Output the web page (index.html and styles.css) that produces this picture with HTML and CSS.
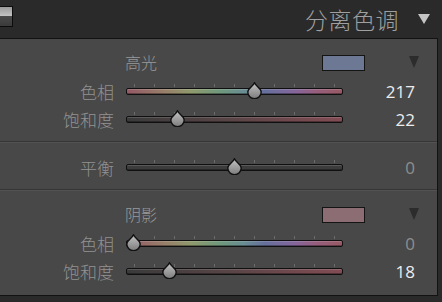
FILE: index.html
```html
<!DOCTYPE html>
<html lang="zh-CN">
<head>
  <meta charset="UTF-8" />
  <title>分离色调</title>
  <link rel="stylesheet" href="styles.css">
</head>
<body>
  <header class="panel-head">
    <span class="head-toggle"></span>
    <h1 class="head-title">分离色调</h1>
    <span class="head-arrow"></span>
  </header>

  <main class="panel">
    <section class="group">
      <div class="group-head">
        <span class="group-title">高光</span>
        <span class="swatch swatch-high"></span>
        <span class="group-arrow"></span>
      </div>
      <div class="row">
        <label class="row-label">色相</label>
        <div class="track-cell">
          <div class="bar bar-hue"></div>
          <svg class="thumb" style="--v:0.603" viewBox="0 0 15 17"><use href="#drop"/></svg>
        </div>
        <span class="row-value">217</span>
      </div>
      <div class="row">
        <label class="row-label">饱和度</label>
        <div class="track-cell">
          <div class="bar bar-sat"></div>
          <svg class="thumb" style="--v:0.22" viewBox="0 0 15 17"><use href="#drop"/></svg>
        </div>
        <span class="row-value">22</span>
      </div>
    </section>

    <section class="group group-balance">
      <div class="row">
        <label class="row-label">平衡</label>
        <div class="track-cell">
          <div class="bar bar-plain"></div>
          <svg class="thumb" style="--v:0.5" viewBox="0 0 15 17"><use href="#drop"/></svg>
        </div>
        <span class="row-value zero">0</span>
      </div>
    </section>

    <section class="group group-last">
      <div class="group-head">
        <span class="group-title">阴影</span>
        <span class="swatch swatch-shadow"></span>
        <span class="group-arrow"></span>
      </div>
      <div class="row">
        <label class="row-label">色相</label>
        <div class="track-cell">
          <div class="bar bar-hue"></div>
          <svg class="thumb" style="--v:0" viewBox="0 0 15 17"><use href="#drop"/></svg>
        </div>
        <span class="row-value zero">0</span>
      </div>
      <div class="row">
        <label class="row-label">饱和度</label>
        <div class="track-cell">
          <div class="bar bar-sat"></div>
          <svg class="thumb" style="--v:0.18" viewBox="0 0 15 17"><use href="#drop"/></svg>
        </div>
        <span class="row-value">18</span>
      </div>
    </section>
  </main>

  <svg class="defs" width="0" height="0">
    <defs>
      <linearGradient id="dropFill" x1="0" y1="0" x2="0" y2="1">
        <stop offset="0" stop-color="#c4c4c4"/>
        <stop offset="1" stop-color="#7c7c7c"/>
      </linearGradient>
      <symbol id="drop" viewBox="0 0 15 17">
        <path d="M7.5 0.8 C9 4.5 14.2 6.5 14.2 10 A6.7 6.7 0 0 1 0.8 10 C0.8 6.5 6 4.5 7.5 0.8 Z" fill="url(#dropFill)" stroke="#111" stroke-width="1.4"/>
      </symbol>
    </defs>
  </svg>
</body>
</html>
```

FILE: styles.css
```css
*,*::before,*::after{box-sizing:border-box;margin:0;padding:0;}
body{
  background:#2a2a2a;
  font-family:"Noto Sans CJK SC","Noto Sans",sans-serif;
  width:442px;
  height:302px;
  overflow:hidden;
}
.defs{position:absolute;}

/* header strip */
.panel-head{
  height:38px;
  display:flex;align-items:center;
  padding-right:12px;
}
.head-toggle{
  align-self:flex-start;
  margin-top:6px;
  width:13px;height:21px;
  border:1px solid #0c0c0c;border-left:none;
  background:linear-gradient(#9a9a9a,#c2c2c2 45%,#4a4a4a 50%,#3a3a3a);
}
.head-title{
  margin-left:auto;
  font-size:23px;font-weight:300;
  line-height:1;
  color:#a0a0a0;
  letter-spacing:0.5px;
}
.head-arrow{
  margin-left:19px;
  width:0;height:0;
  border-left:6px solid transparent;border-right:6px solid transparent;
  border-top:10px solid #c4c4c4;
}

/* panel body */
.panel{
  width:438px;
  background:#484848;
  border-top:1px solid #121212;
  border-right:1px solid #121212;
  border-bottom:1px solid #121212;
}
.group{
  padding:12px 0 8px;
  border-bottom:1px solid #363636;
  box-shadow:0 1px 0 #535353;
}
.group-balance{padding:11px 0 8px;}
.group-last{padding:13px 0 10px;border-bottom:none;box-shadow:none;}

.group-head{
  height:22px;
  margin-bottom:4px;
  display:flex;align-items:center;
  padding-left:125px;padding-right:18px;
}
.group-title{
  flex:1;
  font-size:16px;font-weight:300;line-height:1;
  color:#999;
}
.swatch{
  width:43px;height:16px;
  border:1px solid #141414;
  margin-right:44px;
  margin-top:2px;
}
.swatch-high{background:#6d7895;}
.swatch-shadow{background:#8b6d73;}
.group-arrow{
  width:0;height:0;
  border-left:5.5px solid transparent;border-right:5.5px solid transparent;
  border-top:12px solid #2c2c2c;
}

/* slider rows */
.row{
  height:28px;
  display:grid;
  grid-template-columns:114px 217px 1fr;
  column-gap:12px;
  align-items:center;
  padding-right:22px;
}
.row-label{
  text-align:right;
  font-size:17px;font-weight:300;line-height:1;
  color:#929292;
}
.row-value{
  text-align:right;
  font-family:"Open Sans","Noto Sans",sans-serif;
  font-size:17px;line-height:1;
  color:#ececec;
}
.row-value.zero{color:#8e8e8e;}

.track-cell{
  position:relative;
  height:100%;
  display:flex;align-items:center;
}
.bar{
  position:relative;
  width:100%;height:7px;
  border:1px solid #101010;
  border-radius:2px;
  box-shadow:inset 0 1px 0 rgba(255,255,255,.15), inset 0 -1px 0 rgba(0,0,0,.35);
}
.bar::before{
  content:"";
  position:absolute;
  left:7px;width:202px;
  bottom:calc(100% + 2px);height:3px;
  background:repeating-linear-gradient(to right,#6a6a6a 0 1px,transparent 1px 20px);
}
.bar-hue{
  background:linear-gradient(to right,#945a66,#98806a 18%,#8e9a6c 30%,#6e987e 44%,#6a8e92 54%,#66709c 64%,#84669c 78%,#965e7c 88%,#985a64);
}
.bar-sat{
  background:linear-gradient(to right,#3a3a3a,#564446 45%,#824c54);
}
.bar-plain{
  background:#3c3c3c;
}
.thumb{
  position:absolute;
  width:15px;height:17px;
  top:calc(50% - 9px);
  left:calc(7px + (100% - 16px) * var(--v) - 7px);
}
```
